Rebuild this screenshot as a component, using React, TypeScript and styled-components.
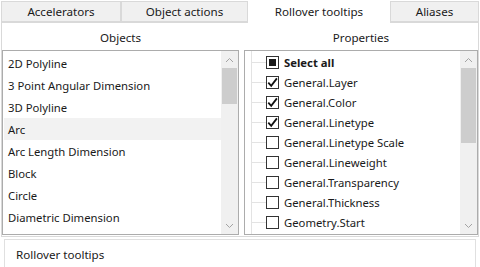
import React from "react";
import styled, { createGlobalStyle } from "styled-components";

const Global = createGlobalStyle`
  html, body { margin: 0; padding: 0; background: #ffffff; }
  body { font-family: "Noto Sans", "Segoe UI", sans-serif; font-size: 11.3px; color: #1a1a1a; }
  * { box-sizing: border-box; }
`;

const Page = styled.div`
  width: 480px;
  height: 267px;
  overflow: hidden;
  position: relative;
  background: #ffffff;
`;

const TabStrip = styled.div`
  display: flex;
  align-items: flex-end;
  height: 22px;
  padding-left: 1px;
  font-size: 11.6px;
`;

const Tab = styled.div<{ $w: number; $active?: boolean }>`
  width: ${(p) => p.$w}px;
  height: ${(p) => (p.$active ? 23 : 21)}px;
  margin-bottom: ${(p) => (p.$active ? -1 : 0)}px;
  background: ${(p) => (p.$active ? "#ffffff" : "#f0f0f0")};
  border: 1px solid ${(p) => (p.$active ? "#ffffff" : "#d9d9d9")};
  border-bottom: ${(p) => (p.$active ? "none" : "1px solid #d9d9d9")};
  display: flex;
  align-items: center;
  justify-content: center;
  padding-bottom: ${(p) => (p.$active ? 2 : 0)}px;
  white-space: nowrap;
  position: relative;
  z-index: ${(p) => (p.$active ? 2 : 1)};
`;

const Panel = styled.div`
  margin-left: 1px;
  width: 478px;
  height: 215px;
  border: 1px solid #d9d9d9;
  display: grid;
  grid-template-columns: 237px 234px;
  grid-template-rows: 27px 185px;
  column-gap: 5px;
`;

const Header = styled.div`
  display: flex;
  align-items: center;
  justify-content: center;
  padding-top: 2px;
  font-size: 11.6px;
`;

const ListBox = styled.div`
  border: 1px solid #acacac;
  display: flex;
  background: #fff;
  overflow: hidden;
`;

const Items = styled.div`
  flex: 1;
  display: flex;
  flex-direction: column;
  padding-top: 1px;
  position: relative;
`;

const ObjRow = styled.div<{ $sel?: boolean }>`
  height: 22px;
  display: flex;
  align-items: center;
  padding-left: 4px;
  margin-left: 1px;
  background: ${(p) => (p.$sel ? "#f2f2f2" : "transparent")};
  white-space: nowrap;
`;

const Scroll = styled.div`
  width: 17px;
  background: #f0f0f0;
  display: flex;
  flex-direction: column;
  align-items: center;
`;

const Arrow = styled.div`
  height: 17px;
  width: 17px;
  display: flex;
  align-items: center;
  justify-content: center;
`;

const Thumb = styled.div<{ $h: number }>`
  width: 15px;
  height: ${(p) => p.$h}px;
  background: #cdcdcd;
`;

const Spacer = styled.div`
  flex: 1;
`;

const TreeLine = styled.div`
  position: absolute;
  left: 6px;
  top: 0;
  bottom: 0;
  border-left: 1px solid #e3e3e3;
`;

const PropRow = styled.div<{ $bold?: boolean }>`
  height: 20px;
  display: flex;
  align-items: center;
  padding-left: 6px;
  font-weight: ${(p) => (p.$bold ? 700 : 400)};
  white-space: nowrap;
  position: relative;
`;

const Branch = styled.div`
  width: 15px;
  border-top: 1px solid #e3e3e3;
`;

const Box = styled.div`
  width: 13px;
  height: 13px;
  border: 1px solid #333333;
  background: #fff;
  display: flex;
  align-items: center;
  justify-content: center;
  margin-right: 5px;
  flex: none;
`;

const Fill = styled.div`
  width: 7px;
  height: 7px;
  background: #1a1a1a;
`;

const Bottom = styled.div`
  margin: 2px 4px 0 4px;
  height: 40px;
  border: 1px solid #e0e0e0;
  padding: 7px 0 0 11px;
  font-size: 11.6px;
`;

const Up = () => (
  <svg width="9" height="6" viewBox="0 0 9 6">
    <path d="M1 5 L4.5 1.5 L8 5" fill="none" stroke="#a3a3a3" strokeWidth="1" />
  </svg>
);
const Down = () => (
  <svg width="9" height="6" viewBox="0 0 9 6">
    <path d="M1 1 L4.5 4.5 L8 1" fill="none" stroke="#a3a3a3" strokeWidth="1" />
  </svg>
);
const Check = () => (
  <svg width="11" height="11" viewBox="0 0 11 11">
    <path d="M1.3 5.6 L4.2 8.8 L9.9 1.4" fill="none" stroke="#111" strokeWidth="1.8" />
  </svg>
);

const objects = [
  "2D Polyline",
  "3 Point Angular Dimension",
  "3D Polyline",
  "Arc",
  "Arc Length Dimension",
  "Block",
  "Circle",
  "Diametric Dimension",
];

const props: [string, boolean][] = [
  ["General.Layer", true],
  ["General.Color", true],
  ["General.Linetype", true],
  ["General.Linetype Scale", false],
  ["General.Lineweight", false],
  ["General.Transparency", false],
  ["General.Thickness", false],
  ["Geometry.Start", false],
];

export default function App() {
  return (
    <Page>
      <Global />
      <TabStrip>
        <Tab $w={120}>Accelerators</Tab>
        <Tab $w={127}>Object actions</Tab>
        <Tab $w={142} $active>Rollover tooltips</Tab>
        <Tab $w={89}>Aliases</Tab>
      </TabStrip>
      <Panel>
        <Header>Objects</Header>
        <Header>Properties</Header>
        <ListBox>
          <Items>
            {objects.map((o) => (
              <ObjRow key={o} $sel={o === "Arc"}>{o}</ObjRow>
            ))}
          </Items>
          <Scroll>
            <Arrow><Up /></Arrow>
            <Thumb $h={36} />
            <Spacer />
            <Arrow><Down /></Arrow>
          </Scroll>
        </ListBox>
        <ListBox>
          <Items>
            <TreeLine />
            <PropRow $bold>
              <Branch />
              <Box><Fill /></Box>
              Select all
            </PropRow>
            {props.map(([p, c]) => (
              <PropRow key={p}>
                <Branch />
                <Box>{c && <Check />}</Box>
                {p}
              </PropRow>
            ))}
          </Items>
          <Scroll>
            <Arrow><Up /></Arrow>
            <Thumb $h={75} />
            <Spacer />
            <Arrow><Down /></Arrow>
          </Scroll>
        </ListBox>
      </Panel>
      <Bottom>Rollover tooltips</Bottom>
    </Page>
  );
}
